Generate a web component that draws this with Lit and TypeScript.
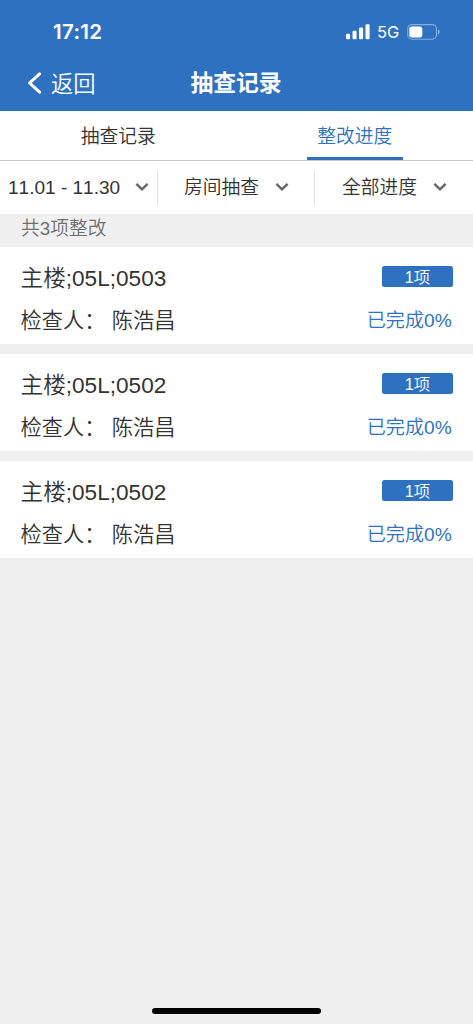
import { LitElement, html, css, svg } from "lit";
import { customElement, property } from "lit/decorators.js";

interface RectificationItem {
  place: string;
  inspector: string;
  count: number;
  done: number;
}

const items: RectificationItem[] = [
  { place: "主楼;05L;0503", inspector: "陈浩昌", count: 1, done: 0 },
  { place: "主楼;05L;0502", inspector: "陈浩昌", count: 1, done: 0 },
  { place: "主楼;05L;0502", inspector: "陈浩昌", count: 1, done: 0 },
];

@customElement("status-bar")
class StatusBar extends LitElement {
  static styles = css`
    :host {
      display: flex;
      align-items: center;
      height: 63px;
      padding: 0 32px 0 53px;
      box-sizing: border-box;
      color: #fff;
    }
    .time {
      flex: 1;
      font: 600 20.5px/24px Inter, sans-serif;
      letter-spacing: 0.3px;
    }
    .signal {
      display: block;
      width: 24px;
      height: 16px;
    }
    .network {
      width: 23px;
      margin: 1px 7px 0 7px;
      font: 400 16.5px/20px Inter, sans-serif;
    }
    .battery {
      display: block;
      width: 34px;
      height: 16px;
    }
  `;
  render() {
    const bars = [
      [0, 5.6],
      [6.5, 8.5],
      [13, 11.8],
      [19.5, 15],
    ];
    return html`
      <span class="time">17:12</span>
      <svg class="signal" viewBox="0 0 24 16" fill="#fff">
        ${bars.map(([x, h]) => svg`<rect x=${x} y=${15.3 - h} width="4.1" height=${h} rx="1.2" />`)}
      </svg>
      <span class="network">5G</span>
      <svg class="battery" viewBox="0 0 34 16">
        <rect x="0.7" y="0.6" width="28.8" height="14.6" rx="4.4" fill="none" stroke="#fff" stroke-opacity="0.42" stroke-width="1.1" />
        <rect x="2.3" y="2.4" width="13" height="11" rx="2.6" fill="#fff" />
        <path d="M31 5.6c2.2 0.7 2.2 4.1 0 4.8z" fill="#fff" fill-opacity="0.5" />
      </svg>
    `;
  }
}

@customElement("filter-cell")
class FilterCell extends LitElement {
  @property() label = "";
  static styles = css`
    :host {
      display: flex;
      align-items: center;
      box-sizing: border-box;
      height: 36px;
      white-space: nowrap;
    }
    .label {
      flex: 1;
      line-height: 36px;
    }
    .arrow {
      display: block;
      width: 14px;
      height: 10px;
      margin-bottom: 2px;
    }
  `;
  render() {
    return html`
      <span class="label">${this.label}</span>
      <svg class="arrow" viewBox="0 0 14 10" fill="none" stroke="#666" stroke-width="2.4">
        <path d="M1.4 1.9 7 7.3 12.6 1.9" />
      </svg>
    `;
  }
}

@customElement("record-card")
class RecordCard extends LitElement {
  @property({ attribute: false }) item!: RectificationItem;
  static styles = css`
    :host {
      display: flex;
      flex-direction: column;
      box-sizing: border-box;
      height: 97px;
      padding: 11px 20px 0 20.6px;
      background: #fff;
    }
    .row {
      display: flex;
      justify-content: space-between;
      height: 42px;
      line-height: 42px;
      white-space: pre;
    }
    .place {
      font-size: 22.6px;
    }
    .inspector {
      font-size: 21.2px;
    }
    .name {
      margin-left: 6.5px;
    }
    .badge {
      width: 71px;
      height: 20.6px;
      margin-top: 8px;
      border-radius: 2.5px;
      background: #2f71c1;
      color: #fff;
      font-size: 16.4px;
      line-height: 22px;
      text-align: center;
    }
    .done {
      color: #2f71c1;
      font-size: 19.1px;
      margin-right: 1.4px;
    }
  `;
  render() {
    const { place, inspector, count, done } = this.item;
    return html`
      <div class="row">
        <span class="place">${place}</span>
        <span class="badge">${count}项</span>
      </div>
      <div class="row">
        <span class="inspector">检查人：<span class="name">${inspector}</span></span>
        <span class="done">已完成${done}%</span>
      </div>
    `;
  }
}

@customElement("app-root")
class AppRoot extends LitElement {
  static styles = css`
    :host {
      display: flex;
      flex-direction: column;
      box-sizing: border-box;
      height: 1024px;
      overflow: hidden;
      background: #f0f0f0;
      color: #333;
      font-family: "Liberation Sans", "Noto Sans CJK SC", sans-serif;
      font-size: 18.75px;
      font-weight: 350;
      font-kerning: none;
    }
    .header {
      height: 111px;
      background: #2f71c1;
      color: #fff;
    }
    .nav {
      display: grid;
      grid-template-columns: 1fr auto 1fr;
      align-items: center;
      height: 37px;
      padding: 0 2px 0 27px;
      margin-right: 26px;
    }
    .back {
      display: flex;
      align-items: center;
      gap: 9px;
      font-size: 22.3px;
    }
    .chevron {
      display: block;
      width: 15px;
      height: 22px;
      margin-top: 3px;
    }
    .title {
      font-size: 22.8px;
      font-weight: 700;
    }
    .tabs {
      display: flex;
      box-sizing: border-box;
      height: 50px;
      background: #fff;
      border-bottom: 1px solid #c8c8c8;
    }
    .tab {
      flex: 1;
      display: flex;
      justify-content: center;
      line-height: 52px;
    }
    .tab span {
      box-sizing: border-box;
      width: 96px;
      height: 49px;
      text-align: center;
    }
    .active span {
      color: #2f71c1;
      border-bottom: 3px solid #2f71c1;
    }
    .filters {
      display: grid;
      grid-template-columns: 158px 157px 158px;
      align-items: center;
      height: 53px;
      background: #fff;
    }
    .date {
      padding: 0 8px;
      border-right: 1px solid #e2e2e2;
      font-size: 19.05px;
    }
    .room {
      padding: 0 25px 0 26px;
      border-right: 1px solid #e2e2e2;
    }
    .progress {
      padding: 0 26px 0 27px;
    }
    .summary {
      height: 33px;
      padding-left: 21px;
      line-height: 30px;
      color: #707070;
    }
    .list {
      flex: 1;
      display: flex;
      flex-direction: column;
      gap: 10px;
    }
    .home {
      width: 169px;
      height: 6px;
      margin: 0 auto 10px;
      border-radius: 3px;
      background: #000;
    }
  `;
  render() {
    return html`
      <header class="header">
        <status-bar></status-bar>
        <div class="nav">
          <div class="back">
            <svg class="chevron" viewBox="0 0 15 22" fill="none" stroke="#fff" stroke-width="3" stroke-linecap="round" stroke-linejoin="round">
              <path d="M12.6 1.8 2.6 11l10 9.2" />
            </svg>
            返回
          </div>
          <div class="title">抽查记录</div>
        </div>
      </header>
      <nav class="tabs">
        <div class="tab"><span>抽查记录</span></div>
        <div class="tab active"><span>整改进度</span></div>
      </nav>
      <div class="filters">
        <filter-cell class="date" label="11.01 - 11.30"></filter-cell>
        <filter-cell class="room" label="房间抽查"></filter-cell>
        <filter-cell class="progress" label="全部进度"></filter-cell>
      </div>
      <div class="summary">共${items.length}项整改</div>
      <main class="list">
        ${items.map((item) => html`<record-card .item=${item}></record-card>`)}
      </main>
      <div class="home"></div>
    `;
  }
}
